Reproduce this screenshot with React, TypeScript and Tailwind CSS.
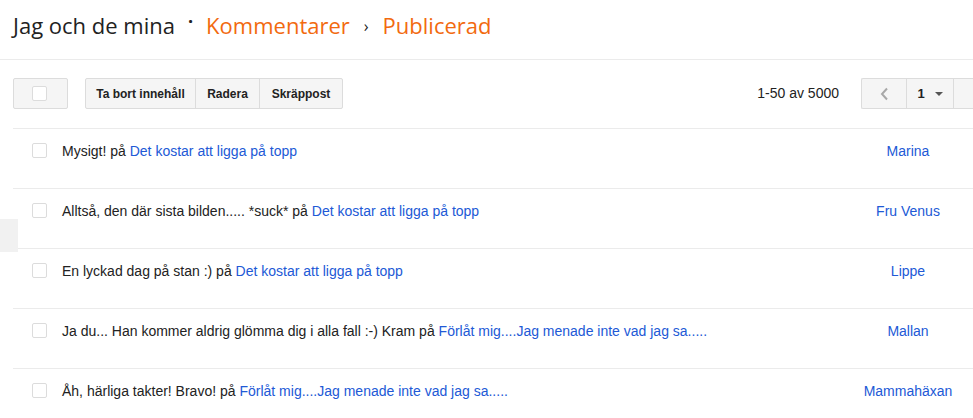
import React from "react";

const rows = [
  { text: "Mysigt! på ", link: "Det kostar att ligga på topp", author: "Marina" },
  { text: "Alltså, den där sista bilden..... *suck* på ", link: "Det kostar att ligga på topp", author: "Fru Venus" },
  { text: "En lyckad dag på stan :) på ", link: "Det kostar att ligga på topp", author: "Lippe" },
  { text: "Ja du... Han kommer aldrig glömma dig i alla fall :-) Kram på ", link: "Förlåt mig....Jag menade inte vad jag sa.....", author: "Mallan" },
  { text: "Åh, härliga takter! Bravo! på ", link: "Förlåt mig....Jag menade inte vad jag sa.....", author: "Mammahäxan" },
];

function Box() {
  return <div className="w-[15px] h-[15px] border border-[#dcdcdc] rounded-[2px] bg-white shrink-0" />;
}

export default function App() {
  return (
    <div className="relative w-[973px] h-[418px] overflow-hidden bg-white font-['Arial','Liberation_Sans',sans-serif] text-[#222]">
      <div className="h-[60px] border-b border-[#ebebeb] flex items-center pl-[13px] pb-[8px] font-['Open_Sans',sans-serif] text-[22px]">
        <span className="text-[#222]">Jag och de mina</span>
        <span className="mx-[13px] text-[#222] text-[18px] font-bold relative -top-[4px]">·</span>
        <span className="text-[#f26a0f]">Kommentarer</span>
        <span className="mx-[14px] text-[#222] text-[16px]">›</span>
        <span className="text-[#f26a0f]">Publicerad</span>
      </div>
      <div className="ml-[13px] h-[69px] border-b border-[#ebebeb] flex items-start pt-[18px]">
        <div className="w-[55px] h-[31px] border border-[#dcdcdc] rounded-[2px] bg-[#f5f5f5] flex items-center pl-[18px]">
          <Box />
        </div>
        <div className="ml-[17px] h-[31px] flex border border-[#dcdcdc] rounded-[2px] bg-[#f5f5f5] text-[12px] font-bold text-[#222]">
          <div className="w-[110px] flex items-center justify-center border-r border-[#dcdcdc]">Ta bort innehåll</div>
          <div className="w-[64px] flex items-center justify-center border-r border-[#dcdcdc]">Radera</div>
          <div className="w-[82px] flex items-center justify-center">Skräppost</div>
        </div>
        <div className="ml-auto h-[31px] flex items-center text-[14px] mr-[22px]">1-50 av 5000</div>
        <div className="h-[31px] flex border border-r-0 border-[#dcdcdc] rounded-l-[2px] bg-[#f5f5f5] w-[112px] shrink-0">
          <div className="w-[45px] flex items-center justify-center border-r border-[#dcdcdc]">
            <svg width="9" height="14" viewBox="0 0 9 14"><path d="M7 1.5 L2 7 L7 12.5" fill="none" stroke="#a8a8a8" strokeWidth="2" /></svg>
          </div>
          <div className="w-[47px] flex items-center justify-center border-r border-[#dcdcdc] text-[13px] font-bold gap-[10px]">
            <span>1</span>
            <svg width="8" height="4" viewBox="0 0 8 4"><path d="M0 0 L8 0 L4 4 Z" fill="#555" /></svg>
          </div>
          <div className="flex-1" />
        </div>
      </div>
      {rows.map((r, i) => (
        <div key={i} className="ml-[13px] h-[60px] border-b border-[#ebebeb] flex items-start pt-[14px] text-[14px] leading-[16px]">
          <div className="pl-[19px] pr-[15px]"><Box /></div>
          <div className="flex-1">
            {r.text}
            <span className="text-[#2159d6]">{r.link}</span>
          </div>
          <div className="w-[130px] text-center text-[#2159d6]">{r.author}</div>
        </div>
      ))}
      <div className="absolute left-0 top-[219px] w-[18px] h-[33px] bg-[#f1f1f1]" />
    </div>
  );
}
